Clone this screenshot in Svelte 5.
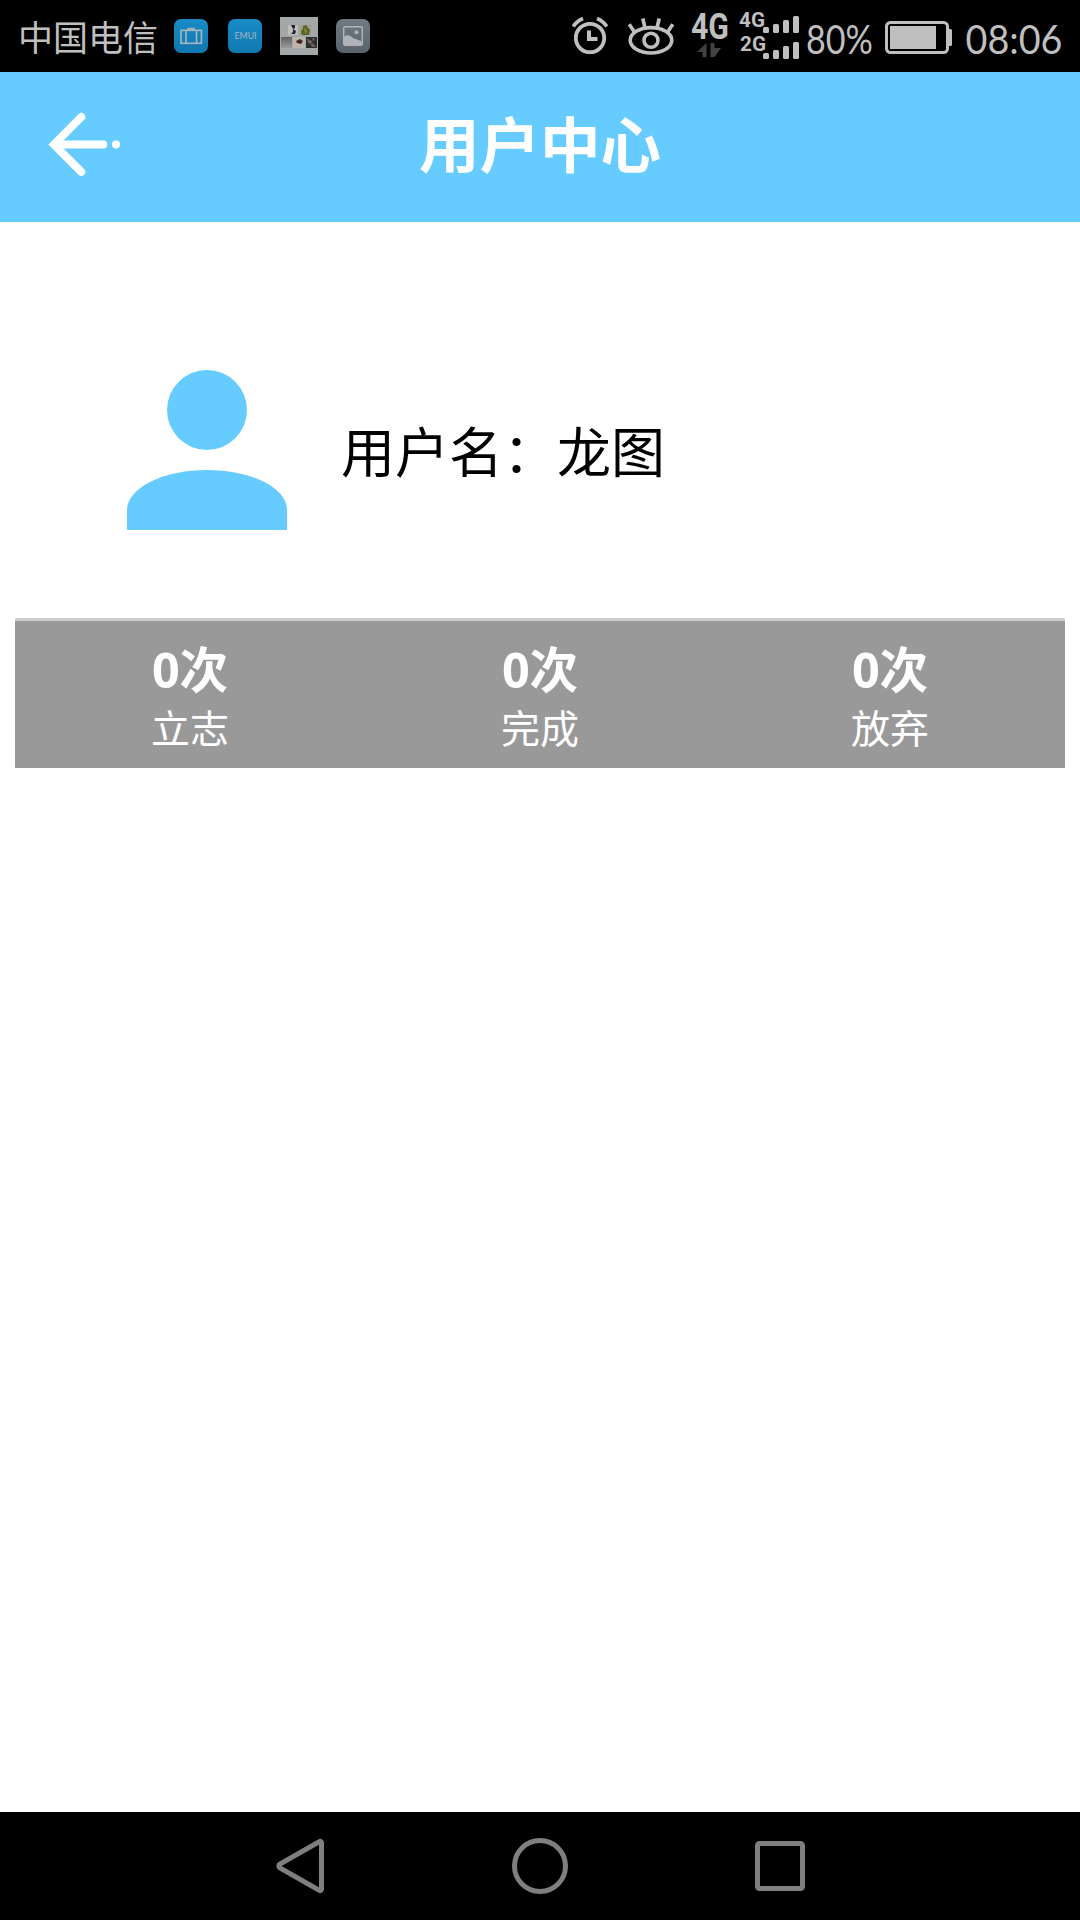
<script>
    let username = "龙图";
    let stats = [
        { count: 0, label: "立志" },
        { count: 0, label: "完成" },
        { count: 0, label: "放弃" },
    ];
    let bars = [6, 9, 13, 17];
</script>

<div class="screen">
    <div class="status">
        <span class="carrier">中国电信</span>
        <svg class="app" width="34" height="34" viewBox="0 0 34 34">
            <defs>
                <linearGradient id="blue" x1="0" y1="0" x2="0" y2="1">
                    <stop offset="0" stop-color="#188bc6" />
                    <stop offset="1" stop-color="#1178b1" />
                </linearGradient>
            </defs>
            <rect width="34" height="34" rx="7" fill="url(#blue)" />
            <g fill="none" stroke="#a9b7be" stroke-width="1.6">
                <rect x="7" y="11.3" width="20.4" height="13" />
                <path d="M12 11v13M22.5 11v13M14.3 11V9.6h5.6V11" />
            </g>
        </svg>
        <svg class="emui" width="34" height="34" viewBox="0 0 34 34">
            <rect width="34" height="34" rx="7" fill="url(#blue)" />
            <text x="6.5" y="20" font-size="9.5" textLength="22" lengthAdjust="spacingAndGlyphs">EMUI</text>
        </svg>
        <svg class="photos" width="38" height="38" viewBox="0 0 38 38">
            <defs>
                <linearGradient id="shade" x1="0" y1="0" x2="0" y2="1">
                    <stop offset="0" stop-color="#606163" />
                    <stop offset="1" stop-color="#9a9b9c" />
                </linearGradient>
            </defs>
            <rect width="38" height="38" fill="#a3a7a8" />
            <rect x="8" y="8" width="10" height="10" fill="#bdbdbd" />
            <path d="M11 8h4v3l-2 1zM13 12l3 2-1 3h-4l2-2z" fill="#20242a" />
            <rect x="20" y="8" width="11" height="10" fill="#9da08b" />
            <path d="M23 9l3-1 2 3 2 2-1 5h-7l-1-4 2-2z" fill="#596326" />
            <path d="M25 10l2 4-1 3-2-3z" fill="#8b833d" />
            <rect x="1" y="20" width="11" height="11" fill="url(#shade)" />
            <rect x="13" y="20" width="12" height="11" fill="#bbb5ae" />
            <path d="M16 24l4-2 3 2-2 3-4-1z" fill="#4a2320" />
            <rect x="26" y="20" width="11" height="11" fill="#28302e" />
            <path d="M27 21l3 2-2 4zM32 21h3l-2 4zM30 27l3-1 3 4h-4z" fill="#7c5450" />
            <path d="M30 23l2 2-3 2z" fill="#829490" />
        </svg>
        <svg class="gallery" width="34" height="34" viewBox="0 0 34 34">
            <defs>
                <linearGradient id="slate" x1="0" y1="0" x2="0" y2="1">
                    <stop offset="0" stop-color="#707a83" />
                    <stop offset="1" stop-color="#59636c" />
                </linearGradient>
            </defs>
            <rect width="34" height="34" rx="7" fill="url(#slate)" />
            <rect x="7.7" y="7.7" width="18.6" height="18.6" rx="1.5" fill="none" stroke="#b0b4b8" stroke-width="1.5" />
            <circle cx="20.5" cy="13.3" r="2" fill="#b0b4b8" />
            <path d="M8 18c3-3 6-2 9 1 3 2 6 1 9 4v3.5H8z" fill="#b0b4b8" />
        </svg>

        <div class="right">
            <svg width="36" height="38" viewBox="0 0 36 38" fill="none" stroke="#bfbfbf">
                <circle cx="18" cy="21" r="14.2" stroke-width="3.8" />
                <path d="M17 13.500v8.500h8.500" stroke-width="4" />
                <path d="M1.2 9.5Q5 4 11 1.5M34.8 9.5Q31 4 25 1.5" stroke-width="3.6" />
            </svg>
            <svg class="eye" width="46" height="38" viewBox="0 0 46 38" fill="none" stroke="#bfbfbf">
                <ellipse cx="23" cy="23.3" rx="20.8" ry="12.7" stroke-width="3.6" />
                <circle cx="23" cy="23.3" r="7" stroke-width="3.6" />
                <path d="M1.2 7.2l5 7.5M14.8 1.5l2 8.5M31.2 1.5l-2 8.5M44.8 7.2l-5 7.5" stroke-width="3.6" />
            </svg>
            <svg class="mobile" width="38" height="50" viewBox="0 0 38 50">
                <text x="0" y="28" font-size="36" textLength="38" lengthAdjust="spacingAndGlyphs">4G</text>
                <path d="M15.5 32v14h-4v-5H6zM19.5 46V32h4v5H30l-6.500 9z" fill="#424242" />
            </svg>
            <svg class="signal" width="61" height="50" viewBox="0 0 61 50">
                <text x="0" y="16" font-size="21" textLength="26" lengthAdjust="spacingAndGlyphs">4G</text>
                <text x="1" y="40" font-size="21" textLength="26" lengthAdjust="spacingAndGlyphs">2G</text>
                {#each [22, 48] as base}
                    {#each bars as height, i}
                        <rect x={24 + i * 10} y={base - height} width="6" {height} rx="1.5" fill="#bfbfbf" />
                    {/each}
                {/each}
            </svg>
            <svg class="percent" width="68" height="56" viewBox="0 0 68 56">
                <text x="0" y="45.500" font-size="40" textLength="67" lengthAdjust="spacingAndGlyphs">80%</text>
            </svg>
            <svg class="battery" width="67" height="33" viewBox="0 0 67 33">
                <rect x="1.500" y="1.500" width="61" height="30" rx="4" fill="none" stroke="#bfbfbf" stroke-width="3" />
                <path d="M5 5h46v23H5zM64 8h1.500q1.500 0 1.500 1.500v14q0 1.500-1.500 1.500H64z" fill="#bfbfbf" />
            </svg>
            <svg class="clock" width="98" height="56" viewBox="0 0 98 56">
                <text x="0.500" y="45.500" font-size="40" textLength="97" lengthAdjust="spacingAndGlyphs">08:06</text>
            </svg>
        </div>
    </div>

    <header>
        <button class="back" aria-label="返回">
            <svg width="74" height="66" viewBox="0 0 74 66" fill="none" stroke="#fff" stroke-width="8">
                <path d="M34.300 5L7 32.500l27.300 27.300M8 32.500h48.300" stroke-linecap="round" />
                <circle cx="69" cy="32.500" r="4" fill="#fff" stroke="none" />
            </svg>
        </button>
        <h1>用户中心</h1>
    </header>

    <main>
        <div class="profile">
            <svg width="160" height="160" viewBox="0 0 16 16" fill="#66ccff">
                <circle cx="8" cy="4" r="4" />
                <path d="M8 10c-4.420 0-8 1.790-8 4v2h16v-2c0-2.210-3.580-4-8-4z" />
            </svg>
            <p>用户名：{username}</p>
        </div>

        <div class="stats">
            {#each stats as stat}
                <div class="stat">
                    <strong>{stat.count}次</strong>
                    <span>{stat.label}</span>
                </div>
            {/each}
        </div>
    </main>

    <nav>
        <svg width="48" height="56" viewBox="0 0 48 56">
            <path d="M45.500 4.500v47q-.5 1.500-2 1L4 30q-2.500-2 0-4L43.500 3.500q1.500-.5 2 1z" />
        </svg>
        <svg width="56" height="56" viewBox="0 0 56 56">
            <circle cx="28" cy="28" r="25.500" />
        </svg>
        <svg width="50" height="50" viewBox="0 0 50 50">
            <rect x="2.500" y="2.500" width="45" height="45" rx="2" />
        </svg>
    </nav>
</div>

<style>
    :global(body) {
        background-color: #fff;
    }

    .screen {
        width: 1080px;
        height: 1920px;
        display: flex;
        flex-direction: column;
        font-family: "Noto Sans", "Noto Sans CJK SC", sans-serif;
        background-color: #fff;
    }

    svg {
        display: block;
        flex-shrink: 0;
        overflow: visible;
    }

    .status {
        height: 72px;
        box-sizing: border-box;
        display: flex;
        align-items: center;
        padding: 0 17px 0 18px;
        background-color: #000;
        color: #bfbfbf;
    }

    .status text {
        fill: #bfbfbf;
        font-family: Roboto, sans-serif;
        font-weight: 700;
    }

    .carrier {
        width: 156px;
        font-family: "Noto Sans CJK SC", sans-serif;
        font-size: 35px;
        line-height: 72px;
        white-space: nowrap;
    }

    .emui {
        margin-left: 20px;
    }

    .status .emui text {
        fill: #a9b7be;
        font-family: Lato, sans-serif;
        font-weight: 400;
    }

    .photos,
    .gallery {
        margin-left: 18px;
    }

    .right {
        display: flex;
        align-items: center;
        margin-left: auto;
    }

    .eye {
        margin-left: 20px;
    }

    .mobile {
        margin-left: 17px;
    }

    .signal {
        margin-left: 10px;
    }

    .percent {
        margin-left: 6px;
    }

    .battery {
        margin: 3px 0 0 11px;
    }

    .clock {
        margin-left: 13px;
    }

    .status .percent text,
    .status .clock text {
        font-family: Lato, sans-serif;
        font-weight: 400;
    }

    header {
        height: 150px;
        display: grid;
        grid-template-columns: 170px 1fr 170px;
        align-items: center;
        background-color: #66ccff;
        color: #fff;
    }

    .back {
        margin: 0;
        padding: 0 0 5px 47px;
        border: none;
        background: none;
    }

    h1 {
        margin: 0;
        padding-bottom: 4px;
        text-align: center;
        font-size: 60.5px;
        font-weight: 700;
        line-height: 88px;
    }

    main {
        flex-grow: 1;
        padding: 148px 15px 0;
    }

    .profile {
        display: flex;
        gap: 54px;
        padding-left: 112px;
    }

    .profile p {
        margin: 42px 0 0;
        font-size: 54px;
        line-height: 80px;
        color: #000;
    }

    .stats {
        height: 150px;
        box-sizing: border-box;
        display: grid;
        grid-template-columns: repeat(3, 1fr);
        margin-top: 88px;
        padding-top: 14px;
        border-top: 3px solid #ccc;
        background-color: #999;
        color: #fff;
    }

    .stat {
        display: flex;
        flex-direction: column;
        align-items: center;
    }

    .stat strong {
        font-size: 48.5px;
        line-height: 69px;
    }

    .stat span {
        font-size: 39px;
        line-height: 48px;
    }

    nav {
        height: 108px;
        display: grid;
        grid-template-columns: repeat(3, 240px);
        justify-content: center;
        place-items: center;
        background-color: #000;
    }

    nav svg {
        fill: none;
        stroke: #7f7f7f;
        stroke-width: 5;
    }
</style>
